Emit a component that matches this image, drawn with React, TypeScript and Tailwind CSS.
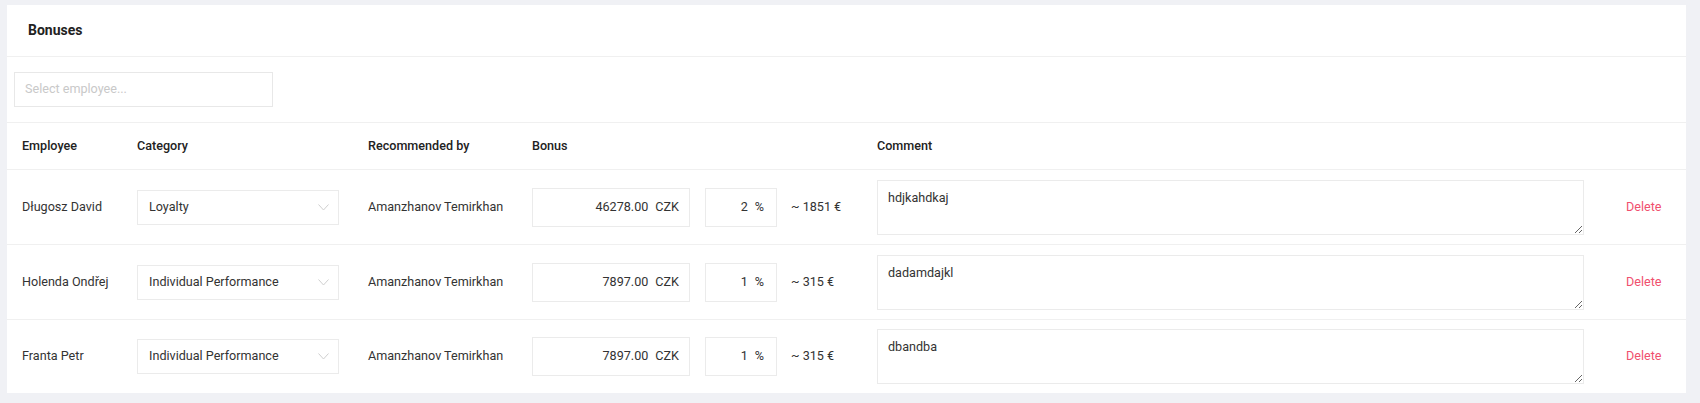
import React from 'react';

const rows = [
  { name: 'Długosz David', category: 'Loyalty', by: 'Amanzhanov Temirkhan', bonus: '46278.00', pct: '2', eur: '~ 1851 €', comment: 'hdjkahdkaj' },
  { name: 'Holenda Ondřej', category: 'Individual Performance', by: 'Amanzhanov Temirkhan', bonus: '7897.00', pct: '1', eur: '~ 315 €', comment: 'dadamdajkl' },
  { name: 'Franta Petr', category: 'Individual Performance', by: 'Amanzhanov Temirkhan', bonus: '7897.00', pct: '1', eur: '~ 315 €', comment: 'dbandba' },
];

const cols = 'grid grid-cols-[115px_231px_164px_173px_86px_86px_748px_1fr] items-center pl-[15px]';

function Chevron() {
  return (
    <svg width="11" height="7" viewBox="0 0 11 7" fill="none" className="shrink-0">
      <path d="M0.5 0.5 L5.5 6 L10.5 0.5" stroke="#cfcfcf" strokeWidth="1" />
    </svg>
  );
}

export default function App() {
  return (
    <div className="min-h-[403px] bg-[#f0f1f5] pt-[5px] pl-[7px] font-['Roboto',sans-serif] text-[12.6px] text-[#333]">
      <div className="w-[1679px] bg-white">
        {/* title */}
        <div className="h-[52px] flex items-center pl-[21px] border-b border-[#f0f0f0]">
          <span className="text-[14px] font-bold text-[#222]">Bonuses</span>
        </div>

        {/* employee picker */}
        <div className="h-[66px] flex items-center pl-[7px] border-b border-[#f0f0f0]">
          <div className="w-[259px] h-[35px] border border-[#e8e8e8] flex items-center pl-[10px] text-[#c9c9c9]">
            Select employee...
          </div>
        </div>

        {/* header */}
        <div className={`${cols} h-[47px] border-b border-[#f0f0f0] font-medium text-[#222]`}>
          <div>Employee</div>
          <div>Category</div>
          <div>Recommended by</div>
          <div>Bonus</div>
          <div></div>
          <div></div>
          <div>Comment</div>
          <div></div>
        </div>

        {rows.map((r, i) => (
          <div
            key={i}
            className={`${cols} ${i < rows.length - 1 ? 'h-[75px] border-b border-[#f0f0f0]' : 'h-[73px]'}`}
          >
            <div>{r.name}</div>
            <div>
              <div className="w-[202px] h-[35px] border border-[#ebebeb] flex items-center justify-between pl-[11px] pr-[9px]">
                <span>{r.category}</span>
                <Chevron />
              </div>
            </div>
            <div>{r.by}</div>
            <div>
              <div className="w-[158px] h-[39px] border border-[#ebebeb] flex items-center justify-end pr-[10px] gap-[7px]">
                <span>{r.bonus}</span>
                <span>CZK</span>
              </div>
            </div>
            <div>
              <div className="w-[72px] h-[39px] border border-[#ebebeb] flex items-center justify-end pr-[12px] gap-[7px]">
                <span>{r.pct}</span>
                <span>%</span>
              </div>
            </div>
            <div>{r.eur}</div>
            <div>
              <textarea
                defaultValue={r.comment}
                className="block w-[707px] h-[55px] border border-[#ebebeb] px-[10px] pt-[8px] text-[12.6px] text-[#333] outline-none"
              />
            </div>
            <div className="pl-[1px] text-[#f0506e]">Delete</div>
          </div>
        ))}
      </div>
    </div>
  );
}
